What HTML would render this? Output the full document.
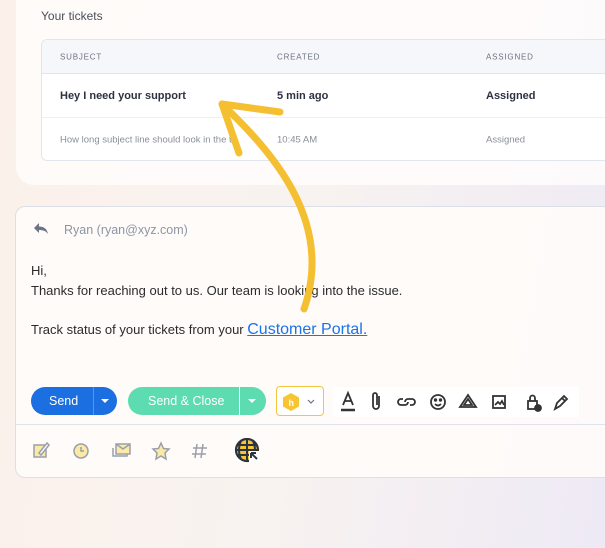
<!DOCTYPE html>
<html><head><meta charset="utf-8"><style>
*{box-sizing:border-box;margin:0;padding:0}
body{width:605px;height:548px;overflow:hidden;position:relative;font-family:"Liberation Sans",sans-serif;background:linear-gradient(100deg,#fbf1ea 0%,#f8f2f0 50%,#eeeaf5 100%)}
.top{position:absolute;left:16px;top:-20px;width:620px;height:205px;background:rgba(255,253,251,.85);border-radius:18px}
.tt{position:absolute;left:41px;top:9px;font-size:12px;color:#4a4f5a}
.tbl{position:absolute;left:41px;top:39px;width:600px;height:122px;background:#fff;border:1px solid #e1e5ee;border-radius:6px;overflow:hidden}
.hd{height:34px;background:#f6f7fb;border-bottom:1px solid #e1e5ee;position:relative}
.r{position:relative;height:44px;border-bottom:1px solid #eef0f4}
.c{position:absolute;top:50%;transform:translateY(-50%);white-space:nowrap}
.hd .c{font-size:8px;letter-spacing:.8px;color:#6b7280}
.b .c{font-size:11px;font-weight:bold;color:#2d3240}
.g .c{font-size:9.5px;color:#8a8f99}
.mail{position:absolute;left:15px;top:206px;width:620px;height:272px;background:rgba(255,252,250,.9);border:1px solid #dcdfe8;border-radius:10px}
.from{position:absolute;left:64px;top:223px;font-size:12.5px;color:#8d95a5}
.txt{position:absolute;left:31px;font-size:13px;color:#2b2b2b}
.btn{position:absolute;top:387px;height:28px;border-radius:14px;color:#fff;font-size:12.5px}
.sep{position:absolute;left:16px;top:424px;width:600px;height:1px;background:#dfe3ec}
</style></head><body>
<div class="top"></div>
<div class="tt">Your tickets</div>
<div class="tbl">
 <div class="hd"><span class="c" style="left:18px">SUBJECT</span><span class="c" style="left:235px">CREATED</span><span class="c" style="left:444px">ASSIGNED</span></div>
 <div class="r b"><span class="c" style="left:18px">Hey I need your support</span><span class="c" style="left:235px">5 min ago</span><span class="c" style="left:444px">Assigned</span></div>
 <div class="r g" style="border:none"><span class="c" style="left:18px">How long subject line should look in the t...</span><span class="c" style="left:235px">10:45 AM</span><span class="c" style="left:444px">Assigned</span></div>
</div>
<div class="mail"></div>
<svg style="position:absolute;left:33px;top:222px" width="16" height="14" viewBox="0 0 16 14"><path d="M6 1 L1 6 L6 11 V8 C10 8 13 9 15 12 C14 7 11 4.5 6 4.5Z" fill="#6b7384"/></svg>
<div class="from">Ryan (ryan@xyz.com)</div>
<div class="txt" style="top:263px">Hi,</div>
<div class="txt" style="top:283px">Thanks for reaching out to us. Our team is looking into the issue.</div>
<div class="txt" style="top:321px">Track status of your tickets from your <span style="color:#1a73e8;text-decoration:underline;font-size:16px">Customer Portal.</span></div>
<div class="btn" style="left:31px;width:86px;background:#1b6fe0"><span style="position:absolute;left:18px;top:7px">Send</span><div style="position:absolute;left:62px;top:0;width:1px;height:28px;background:#5b95ea"></div><div style="position:absolute;left:70px;top:12px;border:4px solid transparent;border-top:4px solid #fff"></div></div>
<div class="btn" style="left:128px;width:138px;background:#5cdcb0"><span style="position:absolute;left:20px;top:7px">Send &amp; Close</span><div style="position:absolute;left:111px;top:0;width:1px;height:28px;background:#fff"></div><div style="position:absolute;left:120px;top:12px;border:4px solid transparent;border-top:4px solid #fff"></div></div>
<div style="position:absolute;left:276px;top:386px;width:48px;height:30px;border:1px solid #f4c542;border-radius:4px;background:#fff">
<svg style="position:absolute;left:5px;top:5px" width="36" height="20" viewBox="0 0 36 20"><path d="M9 1 L17 5.5 V14.5 L9 19 L1 14.5 V5.5Z" fill="#f7c531"/><text x="6.5" y="14" font-size="9" fill="#fff" font-family="Liberation Sans" font-weight="bold">h</text><path d="M26 8 L29 11 L32 8" stroke="#6b7384" fill="none" stroke-width="1.2"/></svg></div>
<div style="position:absolute;left:333px;top:387px;width:246px;height:30px;background:#fff"></div>
<svg style="position:absolute;left:333px;top:387px" width="246" height="30" viewBox="0 0 246 30" fill="none" stroke="#333" stroke-width="1.8">
<path d="M10 18 L15 6 L20 18 M12 14 H18"/><path d="M8 23 H22" stroke-width="2.5"/>
<path d="M46 9 V19 a3 3 0 0 1 -6 0 V8 a2 2 0 0 1 4 0 V18"/>
<path d="M70 12 h-2 a3 3 0 0 0 0 6 h4 a3 3 0 0 0 3 -3 M77 18 h2 a3 3 0 0 0 0 -6 h-4 a3 3 0 0 0 -3 3"/>
<circle cx="105" cy="15" r="7"/><circle cx="102.5" cy="13" r=".8" fill="#333"/><circle cx="107.5" cy="13" r=".8" fill="#333"/><path d="M102 17 q3 3 6 0"/>
<path d="M135 8 L143 20 H127Z M135 12 L139 18 H131Z"/>
<rect x="160" y="9" width="12" height="12"/><path d="M162 18 L165 15 L167 17 L169 14 L171 18"/>
<rect x="195" y="14" width="9" height="8"/><path d="M197 14 V11 a2.5 2.5 0 0 1 5 0 V14"/><circle cx="205" cy="21" r="3" fill="#333"/>
<path d="M222 22 L224 16 L231 9 L234 12 L227 19Z M229 11 L232 14"/>
</svg>
<div class="sep"></div>
<svg style="position:absolute;left:30px;top:438px" width="240" height="28" viewBox="0 0 240 28" fill="none" stroke="#9aa0aa" stroke-width="1.5">
<rect x="4" y="7" width="12" height="12" fill="#fbe9a6"/><path d="M9 15 L17 5 L19 7 L11 17Z" fill="#fff"/>
<circle cx="51" cy="13" r="7" fill="#fbe9a6"/><path d="M51 9 V13 H54"/>
<path d="M83 10 V18 H97 V10" /><rect x="86" y="6" width="14" height="10" fill="#fbe9a6"/><path d="M86 6 L93 11 L100 6"/>
<path d="M131 5 L133.5 10.5 L139 11 L135 15 L136 21 L131 18 L126 21 L127 15 L123 11 L128.5 10.5Z" fill="#fbe9a6"/>
<path d="M167 6 L165 20 M173 6 L171 20 M163 10 H177 M162 16 H176"/>
<circle cx="217" cy="12" r="11" fill="#f7c531" stroke="#2b3240" stroke-width="2.2"/><path d="M206 12 H228 M217 1 V23 M211 3 Q207 12 211 21 M223 3 Q227 12 223 21 M208 7 H226 M208 17 H226" stroke="#2b3240" stroke-width="2"/>
<rect x="219" y="13" width="10" height="12" fill="#fff" stroke="none"/><path d="M221 15 L227 21 M221 15 V20 M221 15 H226" stroke="#2b3240" stroke-width="2"/>
</svg>
<svg style="position:absolute;left:0;top:0" width="605" height="548"><path d="M222 104 C270 150 335 220 304 309" stroke="#f5bf32" stroke-width="7" fill="none" stroke-linecap="round"/><path d="M239 153 L222 104 L280 112" stroke="#f5bf32" stroke-width="7" fill="none" stroke-linecap="round" stroke-linejoin="round"/></svg>
</body></html>
